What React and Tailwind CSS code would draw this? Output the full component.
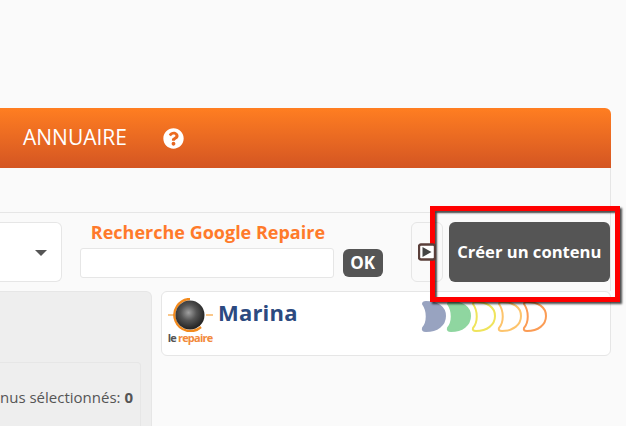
import React from "react";
import { FaQuestionCircle } from "react-icons/fa";

const moons = [
  { fill: "#98a3c0", stroke: "#98a3c0", x: 0 },
  { fill: "#8fd6a0", stroke: "#8fd6a0", x: 25 },
  { fill: "#ffffff", stroke: "#efe45c", x: 50 },
  { fill: "#ffffff", stroke: "#fdc46c", x: 76 },
  { fill: "#ffffff", stroke: "#fb9c55", x: 101 },
];

const Moons = () => (
  <svg width="130" height="32" viewBox="0 0 130 32" className="ml-[122px] mt-[-1px] shrink-0 blur-[0.7px]">
    {moons.map((m) => (
      <path
        key={m.x}
        transform={`translate(${m.x} 0)`}
        d="M3 3 Q3 1 6 1 C17 1 25 6 25 15 C25 24 17 30 6 30 Q2 30 3 27 C8 21 8 10 3 3 Z"
        fill={m.fill}
        stroke={m.stroke}
        strokeWidth="2"
        strokeLinejoin="round"
      />
    ))}
  </svg>
);

const Logo = () => (
  <div className="w-[46px] shrink-0 flex flex-col items-center">
    <svg width="46" height="34" viewBox="0 0 46 34">
      <defs>
        <radialGradient id="lens" cx="45%" cy="42%" r="60%">
          <stop offset="0%" stopColor="#a0a0a0" />
          <stop offset="45%" stopColor="#555555" />
          <stop offset="100%" stopColor="#1e1e1e" />
        </radialGradient>
      </defs>
      <line x1="1" y1="17" x2="7" y2="17" stroke="#f7a23c" strokeWidth="1.2" />
      <line x1="39" y1="17" x2="46" y2="17" stroke="#f7a23c" strokeWidth="1.2" />
      <path d="M34 29 A16 16 0 1 1 23 1" fill="none" stroke="#f28a1e" strokeWidth="2.4" />
      <circle cx="23" cy="17" r="14.5" fill="url(#lens)" />
    </svg>
    <div className="text-[11px] leading-[12px] font-bold tracking-[-0.8px] whitespace-nowrap">
      <span className="text-[#555555]">le</span>
      <span className="text-[#f28a3c]"> repaire</span>
    </div>
  </div>
);

export default function App() {
  return (
    <div className="relative w-[626px] h-[426px] overflow-hidden bg-[#fafafa] text-[#555555] font-['Open_Sans',sans-serif]">
      <div className="w-[611px] pt-[108px]">
        <div className="h-[60px] flex items-center rounded-tr-[6px] bg-gradient-to-b from-[#ff7e21] to-[#d45522] text-white">
          <span className="ml-[23px] text-[21px]">ANNUAIRE</span>
          <FaQuestionCircle className="ml-[36px] text-white" size={21} />
        </div>

        <div className="h-[45px] border-r border-b border-[#e6e6e6]"></div>

        <div className="flex h-[78px] border-r border-[#e6e6e6]">
          <div className="mt-[9px] flex h-[60px] w-[62px] items-center justify-end rounded-r-[6px] border border-l-0 border-[#e6e6e6] bg-white pr-[14px]">
            <span className="mt-[1px] h-0 w-0 border-x-[6px] border-t-[6px] border-x-transparent border-t-[#555555]"></span>
          </div>

          <div className="ml-[18px] w-[254px]">
            <div className="mt-[6px] h-[26px] pl-[11px] text-[18px] leading-[26px] font-bold whitespace-nowrap text-[#ff7a2b]">
              Recherche Google Repaire
            </div>
            <input type="text" className="mt-[3px] block h-[30px] w-[254px] rounded-[3px] border border-[#e6e6e6] bg-white" />
          </div>

          <button type="button" className="ml-[9px] mt-[36px] h-[28px] w-[40px] rounded-[6px] bg-[#555555] text-[17px] font-bold text-white">
            OK
          </button>

          <div className="ml-[28px] mt-[9px] flex h-[60px] w-[32px] items-center rounded-[6px] border border-[#e6e6e6] pl-[6px]">
            <svg width="18" height="18" viewBox="0 0 18 18" className="relative z-10">
              <rect x="1" y="1.5" width="16" height="15" rx="2" fill="#fff" stroke="#5a3f3a" strokeWidth="2.4" />
              <path d="M4.5 4 L13.5 9 L4.5 14 Z" fill="#444444" />
            </svg>
          </div>

          <button type="button" className="ml-[6px] mt-[9px] h-[60px] w-[162px] rounded-[6px] bg-[#555555] text-[16.6px] font-bold whitespace-nowrap text-white">
            Créer un contenu
          </button>
        </div>

        <div className="flex gap-[9px]">
          <div className="h-[200px] w-[152px] rounded-r-[6px] border border-l-0 border-[#e6e6e6] bg-[#eeeeee] pt-[70px] pr-[10px]">
            <div className="h-[100px] rounded-r-[4px] border border-l-0 border-[#e6e6e6] pt-[24px] pr-[12px] text-right text-[15px] leading-[20px] whitespace-nowrap">
              nus sélectionnés: <b>0</b>
            </div>
          </div>

          <div className="flex h-[65px] w-[450px] rounded-[6px] border border-[#e6e6e6] bg-white pt-[6px] pl-[5px]">
            <Logo />
            <div className="ml-[5px] mt-[-1px] text-[22px] leading-[30px] font-bold tracking-[0.2px] text-[#2c4a80]">Marina</div>
            <div className="mt-[4px]">
              <Moons />
            </div>
          </div>
        </div>
      </div>

      <div className="absolute left-[430px] top-[206px] h-[96px] w-[190px] border-[5px] border-[#ff0000] shadow-[2px_2px_2px_rgba(0,0,0,0.7),inset_2px_2px_2px_rgba(0,0,0,0.7)]"></div>
    </div>
  );
}
